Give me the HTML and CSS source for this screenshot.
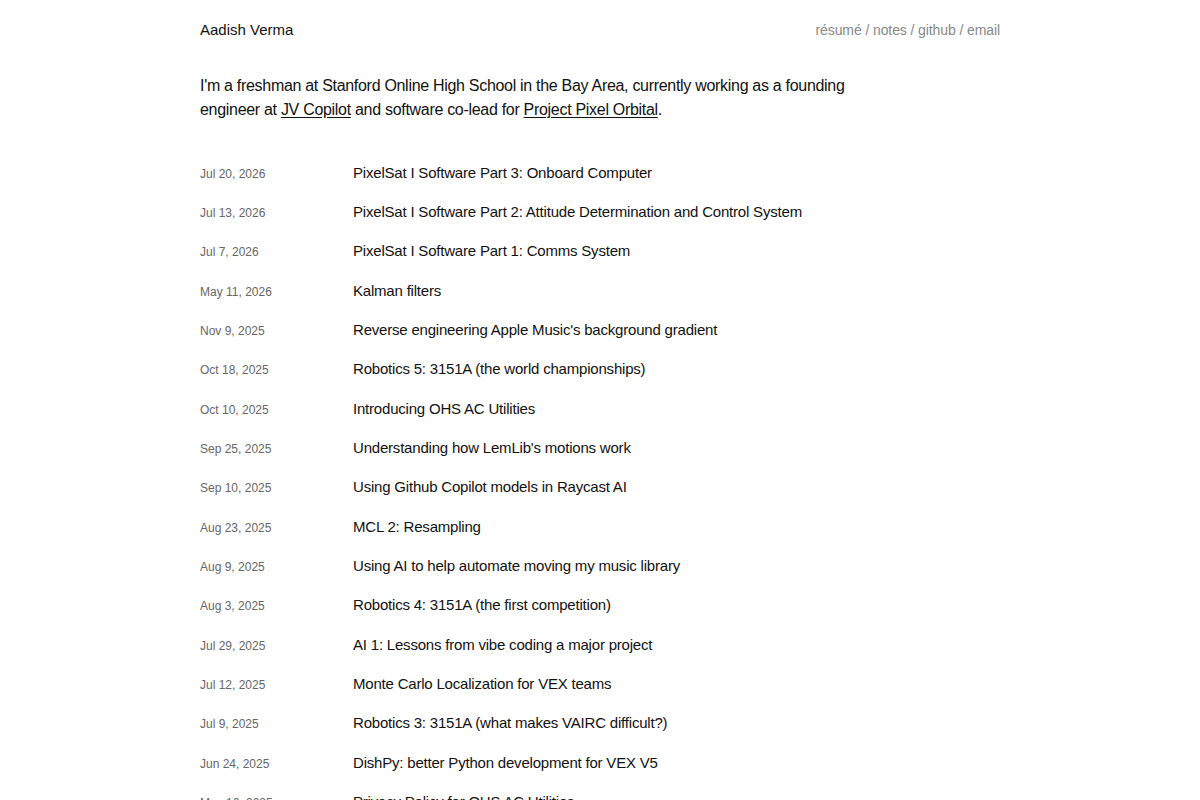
FILE: index.html
```html
<!DOCTYPE html>
<html lang="en">
<head>
  <meta charset="UTF-8">
  <title>Aadish Verma</title>
  <meta name="viewport" content="width=device-width, initial-scale=1.0">
  <link rel="stylesheet" href="styles.css">
</head>
<body>
  <div class="page">
    <header class="top">
      <a class="name" href="#">Aadish Verma</a>
      <nav class="links">
        <a href="#">résumé</a> / <a href="#">notes</a> / <a href="#">github</a> / <a href="#">email</a>
      </nav>
    </header>

    <p class="intro">
      I'm a freshman at Stanford Online High School in the Bay Area, currently working as a founding
      engineer at <a href="#">JV Copilot</a> and software co-lead for <a href="#">Project Pixel Orbital</a>.
    </p>

    <ul class="posts">
      <li><span class="date">Jul 20, 2026</span><a href="#">PixelSat I Software Part 3: Onboard Computer</a></li>
      <li><span class="date">Jul 13, 2026</span><a href="#">PixelSat I Software Part 2: Attitude Determination and Control System</a></li>
      <li><span class="date">Jul 7, 2026</span><a href="#">PixelSat I Software Part 1: Comms System</a></li>
      <li><span class="date">May 11, 2026</span><a href="#">Kalman filters</a></li>
      <li><span class="date">Nov 9, 2025</span><a href="#">Reverse engineering Apple Music's background gradient</a></li>
      <li><span class="date">Oct 18, 2025</span><a href="#">Robotics 5: 3151A (the world championships)</a></li>
      <li><span class="date">Oct 10, 2025</span><a href="#">Introducing OHS AC Utilities</a></li>
      <li><span class="date">Sep 25, 2025</span><a href="#">Understanding how LemLib's motions work</a></li>
      <li><span class="date">Sep 10, 2025</span><a href="#">Using Github Copilot models in Raycast AI</a></li>
      <li><span class="date">Aug 23, 2025</span><a href="#">MCL 2: Resampling</a></li>
      <li><span class="date">Aug 9, 2025</span><a href="#">Using AI to help automate moving my music library</a></li>
      <li><span class="date">Aug 3, 2025</span><a href="#">Robotics 4: 3151A (the first competition)</a></li>
      <li><span class="date">Jul 29, 2025</span><a href="#">AI 1: Lessons from vibe coding a major project</a></li>
      <li><span class="date">Jul 12, 2025</span><a href="#">Monte Carlo Localization for VEX teams</a></li>
      <li><span class="date">Jul 9, 2025</span><a href="#">Robotics 3: 3151A (what makes VAIRC difficult?)</a></li>
      <li><span class="date">Jun 24, 2025</span><a href="#">DishPy: better Python development for VEX V5</a></li>
      <li><span class="date">May 16, 2025</span><a href="#">Privacy Policy for OHS AC Utilities</a></li>
      <li><span class="date">May 2, 2025</span><a href="#">Robotics 2: 3151A (the season begins)</a></li>
    </ul>
  </div>
</body>
</html>
```

FILE: styles.css
```css
* { box-sizing: border-box; }
body {
  margin: 0;
  font-family: 'Liberation Sans', Arial, sans-serif;
  color: #111;
  background: #fff;
}
a { color: inherit; text-decoration: none; }

.page {
  width: 800px;
  margin: 0 auto;
  padding-top: 21px;
}

.top {
  display: flex;
  justify-content: space-between;
  align-items: baseline;
  line-height: 18px;
}
.name { font-size: 15px; }
.links {
  font-size: 14px;
  letter-spacing: -0.1px;
  color: #888;
}

.intro {
  margin: 35px 0 0;
  max-width: 680px;
  font-size: 16px;
  line-height: 24px;
  letter-spacing: -0.3px;
}
.intro a { text-decoration: underline; text-underline-offset: 2px; }

.posts {
  list-style: none;
  margin: 31px 0 0;
  padding: 0;
}
/* fixed row height so the baseline shift of the small date doesn't grow rows */
.posts li {
  display: flex;
  align-items: baseline;
  height: 39.33px;
  padding-top: 9.67px;
  line-height: 20px;
}
.date {
  flex: 0 0 153px;
  font-size: 12px;
  color: #666;
}
.posts a {
  font-size: 15px;
  letter-spacing: -0.2px;
}
```
